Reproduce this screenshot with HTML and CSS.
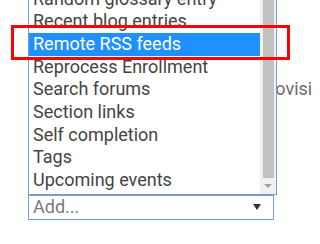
FILE: index.html
```html
<!DOCTYPE html>
<html>
<head>
<meta charset="utf-8">
<link rel="stylesheet" href="styles.css">
</head>
<body>
<div class="stage">
  <div class="page">
    <div class="behind-line"><span class="behind-text">Provisioning</span></div>
    <div class="select">
      <span class="select-label">Add...</span>
      <span class="select-arrow"></span>
    </div>
  </div>

  <div class="listbox">
    <div class="options">
      <div class="option">Random glossary entry</div>
      <div class="option">Recent blog entries</div>
      <div class="option selected">Remote RSS feeds</div>
      <div class="option">Reprocess Enrollment</div>
      <div class="option">Search forums</div>
      <div class="option">Section links</div>
      <div class="option">Self completion</div>
      <div class="option">Tags</div>
      <div class="option">Upcoming events</div>
    </div>
    <div class="scrollbar">
      <div class="thumb"></div>
      <div class="arrow-btn"><span class="arrow-down"></span></div>
    </div>
  </div>

  <div class="highlight-box"></div>
</div>
</body>
</html>
```

FILE: styles.css
```css
html, body {
  margin: 0;
  padding: 0;
  background: #ffffff;
}

.stage {
  position: relative;
  width: 311px;
  height: 244px;
  overflow: hidden;
  font-family: Roboto, "Liberation Sans", sans-serif;
  font-size: 18px;
}

.page {
  display: flex;
  flex-direction: column;
  padding-left: 28px;
}

.behind-line {
  height: 22.7px;
  line-height: 22.7px;
  margin-top: 78px;
  padding-left: 230px;
  white-space: nowrap;
  color: #6b6b6b;
}

.select {
  margin-top: 94px;
  width: 246px;
  height: 25px;
  box-sizing: border-box;
  border: 1px solid #7a9ad6;
  display: flex;
  align-items: center;
  justify-content: space-between;
  padding: 0 12px 0 4px;
  color: #7a7a7a;
}

.select-label {
  line-height: 22px;
}

.select-arrow {
  width: 0;
  height: 0;
  border-left: 4px solid transparent;
  border-right: 4px solid transparent;
  border-top: 6px solid #333333;
}

.listbox {
  position: absolute;
  left: 28px;
  top: -14px;
  width: 249px;
  height: 209px;
  box-sizing: border-box;
  border: 1px solid #7a9ad6;
  border-top: none;
  background: #ffffff;
  display: flex;
}

.options {
  flex: 1;
  padding-top: 1.6px;
  color: #444444;
}

.option {
  height: 22.7px;
  line-height: 22.7px;
  padding-left: 4px;
  white-space: nowrap;
}

.option.selected {
  background: #1e90ff;
  color: #ffffff;
}

.scrollbar {
  width: 16px;
  background: #f1f1f1;
  display: flex;
  flex-direction: column;
  align-items: center;
}

.thumb {
  width: 11px;
  height: 192px;
  background: #c1c1c1;
}

.arrow-btn {
  flex: 1;
  display: flex;
  align-items: center;
  justify-content: center;
}

.arrow-down {
  width: 0;
  height: 0;
  border-left: 4px solid transparent;
  border-right: 4px solid transparent;
  border-top: 4px solid #a3a3a3;
}

.highlight-box {
  position: absolute;
  left: 11px;
  top: 25px;
  width: 279px;
  height: 35px;
  box-sizing: border-box;
  border: 3px solid #ff0000;
}
```
